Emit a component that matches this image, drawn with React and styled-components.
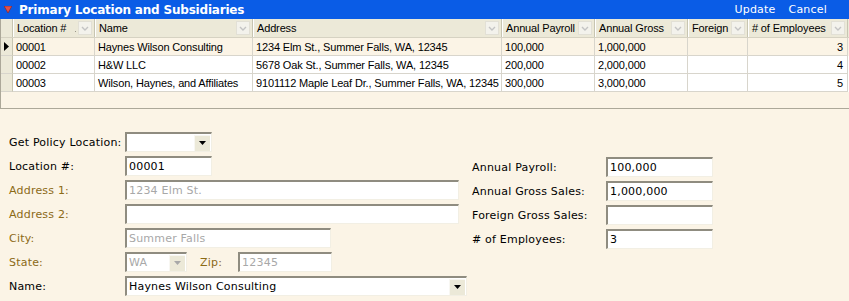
import React from "react";
import styled, { createGlobalStyle } from "styled-components";

const Global = createGlobalStyle`
  html, body { margin: 0; padding: 0; background: #fbf4e6; }
  body { width: 849px; height: 301px; overflow: hidden; }
`;

const Page = styled.div`
  width: 849px;
  height: 301px;
  background: #fbf4e6;
  font-family: "DejaVu Sans", Verdana, sans-serif;
`;

const TitleBar = styled.div`
  height: 19px;
  background: #0a5ce6;
  display: flex;
  align-items: center;
  padding: 0 22px 0 4px;
  color: #fff;
`;

const Title = styled.div`
  font-weight: bold;
  font-size: 12px;
  letter-spacing: -0.2px;
  margin-left: 7px;
  flex: 1;
`;

const Actions = styled.div`
  display: flex;
  gap: 13px;
  font-size: 11px;
  letter-spacing: 0.2px;
`;

const GridWrap = styled.div`
  height: 89px;
  border-left: 1px solid #aca899;
  border-bottom: 1px solid #aca899;
  font-family: "Liberation Sans", Arial, sans-serif;
  font-size: 11px;
  letter-spacing: -0.15px;
`;

const cols = "12px 82px 158px 249px 93px 93px 60px 100px";

const HeaderRow = styled.div`
  display: grid;
  grid-template-columns: ${cols};
  height: 18px;
  background: #ece9d8;
  border-bottom: 1px solid #d6d2c2;
`;

const HeadCell = styled.div`
  display: flex;
  align-items: center;
  padding-left: 3px;
  padding-right: 2px;
  border-left: 1px solid #fff;
  border-right: 1px solid #c7c5b2;
  color: #000;
  white-space: nowrap;
  overflow: hidden;
  span { flex: 1; }
`;

const Corner = styled.div`
  background: #ece9d8;
  border-right: 1px solid #c7c5b2;
`;

const SortDot = styled.i`
  width: 1px;
  height: 1px;
  background: #9a978a;
  margin: 6px 2px 0 0;
`;

const FilterBox = styled.div`
  width: 14px;
  height: 14px;
  background: #f3f2ec;
  border: 1px solid #e2e0d6;
  box-sizing: border-box;
  display: flex;
  align-items: center;
  justify-content: center;
`;

const Row = styled.div`
  display: grid;
  grid-template-columns: ${cols};
  height: 18px;
  background: ${(p) => (p.$active ? "#fbf4e6" : "#fff")};
`;

const Cell = styled.div`
  display: flex;
  align-items: center;
  justify-content: ${(p) => (p.$right ? "flex-end" : "flex-start")};
  padding: 0 4px 0 3px;
  border-right: 1px solid #d8d5cc;
  border-bottom: 1px solid #d8d5cc;
  white-space: nowrap;
  overflow: hidden;
  color: #000;
`;

const Selector = styled.div`
  background: #ece9d8;
  border-right: 1px solid #c7c5b2;
  border-bottom: 1px solid #d8d5cc;
  display: flex;
  align-items: center;
  padding-left: 3px;
`;

const Form = styled.div`
  display: flex;
  padding: 23px 0 0 9px;
  font-size: 11px;
  letter-spacing: 0.2px;
`;

const Column = styled.div`
  display: flex;
  flex-direction: column;
  gap: 4px;
  padding-top: ${(p) => p.$offset || 0}px;
  margin-left: ${(p) => p.$ml || 0}px;
`;

const FieldRow = styled.div`
  display: flex;
  align-items: center;
  height: 20px;
`;

const Label = styled.div`
  width: ${(p) => p.$w}px;
  color: ${(p) => (p.$muted ? "#8b6a16" : "#000")};
  white-space: nowrap;
`;

const Input = styled.div`
  width: ${(p) => p.$w}px;
  height: 20px;
  box-sizing: border-box;
  background: #fff;
  border-top: 2px solid #8f8c80;
  border-left: 2px solid #8f8c80;
  border-bottom: 1px solid #f2efe4;
  border-right: 1px solid #f2efe4;
  display: flex;
  align-items: center;
  padding-left: 2px;
  color: ${(p) => (p.$disabled ? "#a8a8a8" : "#000")};
  white-space: nowrap;
  overflow: hidden;
  font-size: 11px;
`;

const SelectText = styled.div`
  flex: 1;
`;

const DropBtn = styled.div`
  width: 16px;
  height: 16px;
  background: #ece9d8;
  border-left: 1px solid #f8f7f2;
  border-top: 1px solid #f8f7f2;
  box-sizing: border-box;
  display: flex;
  align-items: center;
  justify-content: center;
  margin-right: 1px;
`;

const InlineLabel = styled.div`
  color: #8b6a16;
  margin: 0 16px 0 13px;
`;

function Chevron() {
  return (
    <svg width="8" height="5" viewBox="0 0 8 5">
      <path d="M1 1 L4 4 L7 1" stroke="#c3c3c3" strokeWidth="1.4" fill="none" />
    </svg>
  );
}

function Tri({ color = "#000" }) {
  return (
    <svg width="7" height="4" viewBox="0 0 7 4">
      <path d="M0 0 H7 L3.5 4 Z" fill={color} />
    </svg>
  );
}

const headers = [
  "Location #",
  "Name",
  "Address",
  "Annual Payroll",
  "Annual Gross",
  "Foreign",
  "# of Employees",
];

const rows = [
  ["00001", "Haynes Wilson Consulting", "1234 Elm St., Summer Falls, WA, 12345", "100,000", "1,000,000", "", "3"],
  ["00002", "H&W LLC", "5678 Oak St., Summer Falls, WA, 12345", "200,000", "2,000,000", "", "4"],
  ["00003", "Wilson, Haynes, and Affiliates", "9101112 Maple Leaf Dr., Summer Falls, WA, 12345", "300,000", "3,000,000", "", "5"],
];

function Select({ w, value, disabled }) {
  return (
    <Input $w={w} $disabled={disabled} style={{ paddingRight: 0 }}>
      <SelectText>{value}</SelectText>
      <DropBtn>
        <Tri color={disabled ? "#a8a8a8" : "#000"} />
      </DropBtn>
    </Input>
  );
}

export default function App() {
  return (
    <Page>
      <Global />
      <TitleBar>
        <svg width="8" height="7" viewBox="0 0 8 7">
          <path d="M0 0 H8 L4 7 Z" fill="#e0504a" stroke="#8a2020" strokeWidth="0.6" />
        </svg>
        <Title>Primary Location and Subsidiaries</Title>
        <Actions>
          <span>Update</span>
          <span>Cancel</span>
        </Actions>
      </TitleBar>
      <GridWrap>
        <HeaderRow>
          <Corner />
          {headers.map((h, i) => (
            <HeadCell key={h}>
              <span>{h}</span>
              {i === 0 && <SortDot />}
              <FilterBox>
                <Chevron />
              </FilterBox>
            </HeadCell>
          ))}
        </HeaderRow>
        {rows.map((r, i) => (
          <Row key={i} $active={i === 0}>
            <Selector>
              {i === 0 && (
                <svg width="5" height="9" viewBox="0 0 5 9">
                  <path d="M0 0 L5 4.5 L0 9 Z" fill="#000" />
                </svg>
              )}
            </Selector>
            {r.map((c, j) => (
              <Cell key={j} $right={j === 6}>
                {c}
              </Cell>
            ))}
          </Row>
        ))}
      </GridWrap>
      <Form>
        <Column>
          <FieldRow>
            <Label $w={116}>Get Policy Location:</Label>
            <Select w={87} value="" />
          </FieldRow>
          <FieldRow>
            <Label $w={116}>Location #:</Label>
            <Input $w={87}>00001</Input>
          </FieldRow>
          <FieldRow>
            <Label $w={116} $muted>Address 1:</Label>
            <Input $w={334} $disabled>1234 Elm St.</Input>
          </FieldRow>
          <FieldRow>
            <Label $w={116} $muted>Address 2:</Label>
            <Input $w={334} />
          </FieldRow>
          <FieldRow>
            <Label $w={116} $muted>City:</Label>
            <Input $w={206} $disabled>Summer Falls</Input>
          </FieldRow>
          <FieldRow>
            <Label $w={116} $muted>State:</Label>
            <Select w={62} value="WA" disabled />
            <InlineLabel>Zip:</InlineLabel>
            <Input $w={94} $disabled>12345</Input>
          </FieldRow>
          <FieldRow>
            <Label $w={116}>Name:</Label>
            <Select w={342} value="Haynes Wilson Consulting" />
          </FieldRow>
        </Column>
        <Column $offset={25} $ml={5}>
          <FieldRow>
            <Label $w={134}>Annual Payroll:</Label>
            <Input $w={107}>100,000</Input>
          </FieldRow>
          <FieldRow>
            <Label $w={134}>Annual Gross Sales:</Label>
            <Input $w={107}>1,000,000</Input>
          </FieldRow>
          <FieldRow>
            <Label $w={134}>Foreign Gross Sales:</Label>
            <Input $w={107} />
          </FieldRow>
          <FieldRow>
            <Label $w={134}># of Employees:</Label>
            <Input $w={107}>3</Input>
          </FieldRow>
        </Column>
      </Form>
    </Page>
  );
}
